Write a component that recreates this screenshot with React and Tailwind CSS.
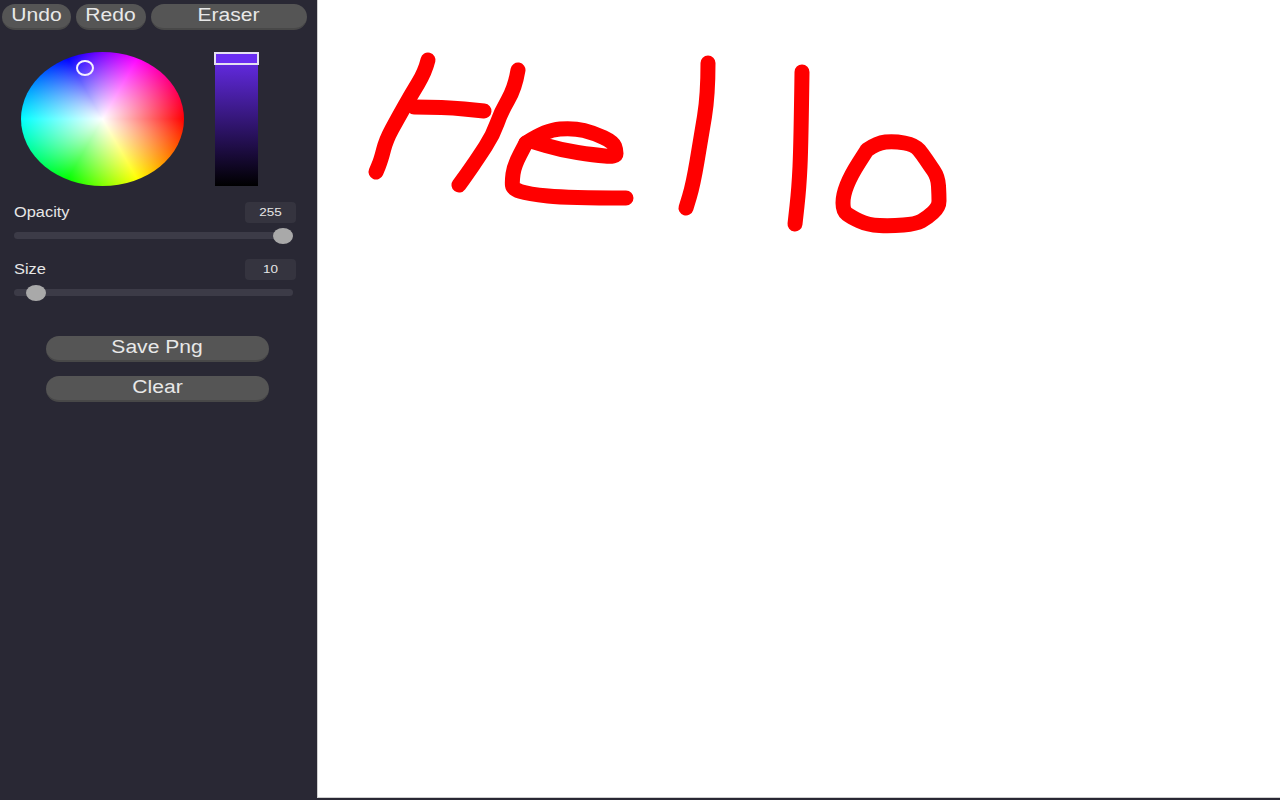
import React from 'react';

const Stretched = ({ className, children }) => (
  <span className={`inline-block scale-x-[1.17] ${className}`}>{children}</span>
);

const PillButton = ({ label, className }) => (
  <button className={`h-[26px] rounded-full bg-[#555555] border-b-2 border-[#484848] flex items-center justify-center text-[#e8e8e8] ${className}`}>
    <Stretched className="text-[18px] leading-none -mt-[2px]">{label}</Stretched>
  </button>
);

const SliderRow = ({ label, value, thumb, className }) => (
  <div className={className}>
    <div className="flex items-center justify-between w-[282px]">
      <Stretched className="origin-left text-[14px] font-medium text-[#e6e6e6] -mt-[1px]">{label}</Stretched>
      <div className="w-[51px] h-[21px] rounded-[4px] bg-[#35343f] flex items-center justify-center text-[#e6e6e6]">
        <Stretched className="text-[11.5px] leading-none">{value}</Stretched>
      </div>
    </div>
    <div className="relative mt-[9px] w-[279px] h-[7px] rounded-full bg-[#3c3b47]">
      <div className={`absolute -top-[4px] w-[20px] h-[16px] rounded-[50%] bg-[#a9a9a9] ${thumb}`} />
    </div>
  </div>
);

const ColorPicker = () => (
  <div className="flex mt-[22px] pl-[21px]">
    <div className="relative w-[163px] h-[134px] rounded-[50%] bg-[conic-gradient(from_90deg,#ff0000,#ffff00,#00ff00,#00ffff,#0000ff,#ff00ff,#ff0000)]">
      <div className="w-full h-full rounded-[50%] bg-[radial-gradient(closest-side,#ffffff,#ffffff00)]" />
      <div className="absolute left-[55px] top-[8px] w-[18px] h-[16px] rounded-[50%] border-[2.5px] border-[#f4f0ff]" />
    </div>
    <div className="relative ml-[31px] w-[43px] h-[134px] bg-[linear-gradient(to_bottom,#6a2df2,#000000)]">
      <div className="absolute -left-[1px] top-0 w-[45px] h-[13px] bg-[#6a2df2] border-2 border-[#e4e0f2]" />
    </div>
  </div>
);

// hand drawn strokes, rounded through the midpoints
const smooth = (pts) => {
  let d = `M${pts[0][0]} ${pts[0][1]}`;
  for (let i = 1; i < pts.length - 1; i++) {
    const mx = (pts[i][0] + pts[i + 1][0]) / 2;
    const my = (pts[i][1] + pts[i + 1][1]) / 2;
    d += ` Q${pts[i][0]} ${pts[i][1]} ${mx} ${my}`;
  }
  const last = pts[pts.length - 1];
  return `${d} L${last[0]} ${last[1]}`;
};

const strokes = [
  [[427, 60], [424, 72], [410, 95], [397, 118], [385, 140], [380, 160], [375, 172]],
  [[413, 107], [443, 107], [483, 111]],
  [[517, 70], [514, 88], [500, 112], [492, 135], [477, 158], [466, 174], [458, 185]],
  [[625, 198], [567, 198], [527, 194], [512, 189], [511, 182], [513, 166], [525, 143]],
  [[525, 143], [545, 130], [573, 128], [593, 133], [612, 142], [615, 150], [615, 157], [593, 155], [560, 150], [530, 141]],
  [[707, 63], [707, 95], [700, 138], [692, 185], [685, 208]],
  [[801, 72], [800, 145], [798, 188], [794, 224]],
  [[866, 150], [876, 143], [893, 141], [914, 145], [922, 155], [928, 164], [937, 177], [938, 195], [938, 207], [926, 218], [915, 224], [890, 226], [867, 225], [850, 217], [842, 211], [842, 195], [850, 175], [866, 150]],
];

const Drawing = () => (
  <svg viewBox="317 0 962 797" className="block w-full h-full" fill="none" stroke="#ff0000" strokeWidth="15" strokeLinecap="round" strokeLinejoin="round">
    {strokes.map((pts, i) => (
      <path key={i} d={smooth(pts)} />
    ))}
  </svg>
);

export default function App() {
  return (
    <div className="flex w-[1280px] h-[800px] overflow-hidden bg-[#292834] font-['Liberation_Sans',Arial,sans-serif]">
      <div className="w-[317px] shrink-0 pt-[4px]">
        <div className="flex gap-[5px] pl-[2px]">
          <PillButton label="Undo" className="w-[69px]" />
          <PillButton label="Redo" className="w-[70px]" />
          <PillButton label="Eraser" className="w-[156px]" />
        </div>

        <ColorPicker />

        <div className="pl-[14px]">
          <SliderRow label="Opacity" value="255" thumb="left-[259px]" className="mt-[16px]" />
          <SliderRow label="Size" value="10" thumb="left-[12px]" className="mt-[20px]" />
        </div>

        <div className="flex flex-col gap-[14px] mt-[40px] pl-[46px]">
          <PillButton label="Save Png" className="w-[223px]" />
          <PillButton label="Clear" className="w-[223px]" />
        </div>
      </div>

      <div className="flex-1 h-[798px] bg-white border-l border-b border-[#cfcfcf]">
        <Drawing />
      </div>
    </div>
  );
}
